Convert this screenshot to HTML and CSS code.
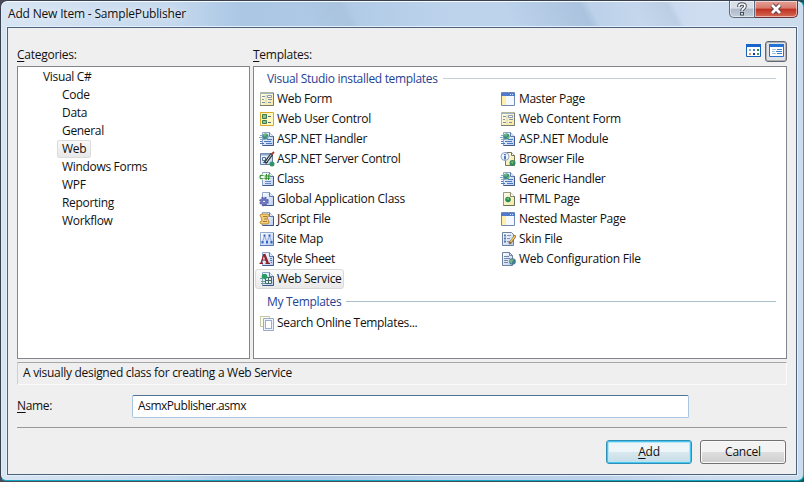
FILE: index.html
```html
<!DOCTYPE html>
<html lang="en">
<head>
<meta charset="utf-8">
<title>Add New Item - SamplePublisher</title>
<link rel="stylesheet" href="styles.css">
</head>
<body>
<svg class="defs" width="0" height="0" aria-hidden="true">
  <defs>
    <linearGradient id="paper" x1="0" y1="0" x2="1" y2="1"><stop offset="0" stop-color="#fff"/><stop offset="1" stop-color="#b9cdf0"/></linearGradient>
    <linearGradient id="cream" x1="0" y1="0" x2="1" y2="1"><stop offset="0" stop-color="#fffef0"/><stop offset="1" stop-color="#f6e79a"/></linearGradient>
    <symbol id="page" viewBox="0 0 16 16">
      <path d="M3.5 1.5h7l4 4v9h-11z" fill="url(#paper)" stroke="#8ea4c8"/>
      <path d="M14.500 5v9.500h-11" fill="none" stroke="#41598a"/>
      <path d="M10.500 1.500v4h4" fill="#dce8fa" stroke="#5f7bab"/>
    </symbol>
    <symbol id="form" viewBox="0 0 16 16">
      <path d="M1.500 1.500h13v13h-13z" fill="url(#cream)" stroke="#b3b698"/>
      <path d="M14.500 2v12.500H1" fill="none" stroke="#777d70"/>
      <path d="M2 2.500h12" stroke="#9eb3cf"/>
      <path d="M3 5.500h3M3 8.500h2M3 11.500h3M9 8.500h4M9 11.500h3" stroke="#7d90b0"/>
      <path d="M8.500 4.500h4v2h-4z" fill="#fff" stroke="#8d9bb2"/>
      <path d="M7 4v9" stroke="#d0d2bb"/>
    </symbol>
    <symbol id="control" viewBox="0 0 16 16">
      <path d="M1.500 1.500h13v13h-13z" fill="#fff8bb" stroke="#d7a927"/>
      <path d="M3.500 3.500h4v4h-4zM3.500 9.500h4v3h-4z" fill="#8fc387" stroke="#3f7850"/>
      <path d="M9 5.500h3M9 11.500h3" stroke="#55657b"/>
    </symbol>
    <symbol id="handler" viewBox="0 0 16 16">
      <use href="#page"/>
      <path d="M8 8.500h5M5 10.500h7M7 12.500h6M1 10.500h2M1 12.500h4" stroke="#4b7abd"/>
      <circle cx="6.500" cy="5.500" r="3" fill="#3d8b88"/>
      <path d="M4 4q2-3 4-1L6 6zM7 7l2-2v3" fill="#6dbb70"/>
      <path d="M1 4.500h2M0 6.500h4M1 8.500h5" stroke="#7fa6cb"/>
    </symbol>
    <symbol id="server" viewBox="0 0 16 16">
      <path d="M1.500 2.500h12v11h-12z" fill="url(#paper)" stroke="#657b9f"/>
      <path d="M2 3.500h11" stroke="#8da6d2" stroke-width="2"/>
      <path d="M3.500 6.500h3v3h-3zM4 11.500h5" fill="none" stroke="#59719d"/>
      <path d="M6 12l7-9" stroke="#263644" stroke-width="3"/>
      <path d="M7 11l5-7" stroke="#dbdfd1"/>
      <path d="M12 4l3-3" stroke="#a54339" stroke-width="2"/>
      <circle cx="13" cy="13" r="2.500" fill="#2c956a"/>
    </symbol>
    <symbol id="class" viewBox="0 0 16 16">
      <use href="#page"/>
      <path d="M6 10.500h6M6 12.500h6" stroke="#688ac0"/>
      <path d="M0 3h11v6H0z" fill="#f3fff0"/>
      <path d="M4.500 4.500q-3.500-1-3.500 1.500t3.500 1.500M7.500 3L7 9M10 3L9.500 9M5.500 5h6M5.200 7.300h6" fill="none" stroke="#2c8a2a" stroke-width="1.100"/>
    </symbol>
    <symbol id="global" viewBox="0 0 16 16">
      <use href="#page"/>
      <circle cx="5" cy="10.500" r="3.800" fill="#777fc5" stroke="#5a63b0" stroke-width="2" stroke-dasharray="1.800 1.200"/>
      <circle cx="5" cy="10.500" r="1.500" fill="#dfe2fa" stroke="#555ca5"/>
    </symbol>
    <symbol id="script" viewBox="0 0 16 16">
      <use href="#page"/>
      <path d="M2 3h7q2 1 0 3H8l2 5q0 2-2 2H2q-2-2 0-3h1L2 6Q0 4 2 3z" fill="#f3cf78" stroke="#bd8a3c"/>
      <path d="M4 5.500h4M5 8h3M4 10.500h4" stroke="#a97a35"/>
    </symbol>
    <symbol id="sitemap" viewBox="0 0 16 16">
      <path d="M1.500 1.500h13v13h-13z" fill="url(#paper)" stroke="#91a9d1"/>
      <path d="M14.500 2v12.500H1" fill="none" stroke="#5576b5"/>
      <path d="M5.500 5l-2 6M5.500 5l2.500 6M10.500 5L8 11M10.500 5l2 6" stroke="#8aa4dc"/>
      <path d="M4.500 3.500h2v2h-2zM9.500 3.500h2v2h-2zM2.500 10h2v2.500h-2zM7 10h2v2.500H7zM11.500 10h2v2.500h-2z" fill="#315fc2"/>
    </symbol>
    <symbol id="style" viewBox="0 0 16 16">
      <use href="#page"/>
      <path d="M11 7.500h2M11 9.500h2M12 11.500h1" stroke="#5878a9"/>
      <path d="M2 12L5 3M3 9h5M.5 12.300h3.500M6.500 12.300h4.500" fill="none" stroke="#8f2026" stroke-width="1.200"/>
      <path d="M5.200 3l3.500 9" stroke="#8f2026" stroke-width="2.300"/>
    </symbol>
    <symbol id="service" viewBox="0 0 16 16">
      <use href="#page"/>
      <path d="M6.500 6.500h6v6h-6zM9.500 6v7M6 9.500h7" fill="#e0f0ed" stroke="#47696a"/>
      <circle cx="5.500" cy="5.500" r="2.800" fill="#299b65"/>
      <path d="M1 7.500h4M2 10.500h4M2 12.500h4" stroke="#66a49a"/>
    </symbol>
    <symbol id="search" viewBox="0 0 16 16">
      <path d="M1.500 1.500h9v10h-9z" fill="#fffde7" stroke="#c4c6a9"/>
      <path d="M4.500 3.500h10v12h-10z" fill="#eaf2ff" stroke="#9baac5"/>
      <path d="M6.500 5.500h6v8h-6z" fill="#fff" stroke="#3d639e" stroke-dasharray="1 1"/>
    </symbol>
    <symbol id="master" viewBox="0 0 16 16">
      <path d="M1.500 1.500h13v13h-13z" fill="#f5f8fd" stroke="#6f88b6"/>
      <path d="M1 2h14v3H1z" fill="#4f7acb"/>
      <path d="M2 5h4v9H2z" fill="#fff0a7"/>
      <path d="M10 3.500h1M12 3.500h1" stroke="#dce8ff"/>
    </symbol>
    <symbol id="browser" viewBox="0 0 16 16">
      <path d="M5.500 1.500h6l3 3v10h-9z" fill="url(#cream)" stroke="#77745c"/>
      <path d="M11.500 1.500v3h3" fill="#fff" stroke="#77745c"/>
      <circle cx="5" cy="5.500" r="4" fill="#eef5ff" stroke="#8da4c7"/>
      <path d="M5 3v1.200M5 5v3.500" stroke="#244b9c" stroke-width="1.500"/>
      <circle cx="12.500" cy="12" r="3" fill="#328864"/>
      <path d="M10.500 11l3-1-1 3" fill="#8ac366"/>
    </symbol>
    <symbol id="html" viewBox="0 0 16 16">
      <path d="M3.500 1.500h7l4 4v9h-11z" fill="url(#cream)" stroke="#989a86"/>
      <path d="M14.500 5v9.500h-11" fill="none" stroke="#65725f"/>
      <path d="M10.500 1.500v4h4" fill="#fff" stroke="#8a876f"/>
      <circle cx="8" cy="8.500" r="2.800" fill="#2b885d"/><path d="M6 8l3-2v3" fill="#78bc67"/>
    </symbol>
    <symbol id="skin" viewBox="0 0 16 16">
      <path d="M2.500 1.500h9l2 2v11h-11z" fill="url(#paper)" stroke="#6c80a2"/>
      <path d="M4 4.500h2M4 7.500h2M4 10.500h2" stroke="#5a79b2" stroke-width="2"/>
      <path d="M7 4.500h4M7 7.500h3M7 10.500h3" stroke="#8296b2"/>
      <path d="M9 12.500l1.500-1 5-7" fill="none" stroke="#846a34" stroke-width="2.600"/><path d="M10.500 11l4.500-6" stroke="#efc75b" stroke-width="1.400"/>
    </symbol>
    <symbol id="config" viewBox="0 0 16 16">
      <path d="M2.500 1.500h7l3 3v10h-10z" fill="url(#paper)" stroke="#6f819e"/>
      <path d="M9.500 1.500v3h3M4 5.500h5M4 7.500h6M4 9.500h4M4 11.500h4" fill="none" stroke="#7188ab"/>
      <circle cx="12.500" cy="10.500" r="3.300" fill="#447f91"/><path d="M10 9l4-1-2 3v2l-2-2z" fill="#77b978"/>
    </symbol>
  </defs>
</svg>
<main class="window">
  <header class="titlebar">
    <h1 class="title">Add New Item - SamplePublisher</h1>
    <div class="caption">
      <button class="help" aria-label="Help"><svg width="12" height="14" viewBox="0 0 12 14"><path d="M3 5V4q0-2 3-2t3 2q0 1.500-1.500 2.500Q6 7.500 6 9" fill="none" stroke="#474b58" stroke-width="3.600"/><path d="M4 10h4v3.500H4z" fill="#474b58"/><path d="M3 4.700V4q0-2 3-2t3 2q0 1.500-1.500 2.500Q6 7.500 6 8.700M6 11v1.500" fill="none" stroke="#fff" stroke-width="1.700"/></svg></button>
      <button class="close" aria-label="Close"><svg width="14" height="12" viewBox="0 0 14 12"><path d="M3 2l8 8M11 2l-8 8" stroke="#624048" stroke-width="4.600"/><path d="M3 2l8 8M11 2l-8 8" stroke="#fff" stroke-width="2.700"/></svg></button>
    </div>
  </header>
  <section class="client">
    <div class="labels">
      <span class="cat-label"><u>C</u>ategories:</span>
      <span class="tpl-label"><u>T</u>emplates:</span>
      <div class="views">
        <button class="view" aria-label="Large icons"><svg width="15" height="14" viewBox="0 0 15 14"><path d="M.5.5h14v12H.5z" fill="#fff" stroke="#1760ba"/><path d="M0 1.500h15" stroke="#1764cb" stroke-width="3"/><path d="M3 5h2v2H3z" fill="#87a8cd"/><path d="M7 5h2v2H7z" fill="#4d83c5"/><path d="M11 5h2v2h-2z" fill="#36834c"/><path d="M3 9h2v2H3z" fill="#df9272"/><path d="M7 9h2v2H7z" fill="#202b91"/><path d="M11 9h2v2h-2z" fill="#4b9a55"/></svg></button>
        <button class="view pressed" aria-label="Small icons"><svg width="15" height="14" viewBox="0 0 15 14"><path d="M.5.500h14v12H.5z" fill="#fff" stroke="#2872cb"/><path d="M0 1.500h15" stroke="#2472d4" stroke-width="3"/><path d="M3 5.500h4M3 7.500h3M3 9.500h4" stroke="#a3bddb"/><path d="M8 5.500h5M7 7.500h6M8 9.500h5" stroke="#397cd0"/></svg></button>
      </div>
    </div>
    <div class="lists">
      <ul class="categories">
        <li class="root">Visual C#</li>
        <li>Code</li><li>Data</li><li>General</li>
        <li><span class="picked">Web</span></li>
        <li>Windows Forms</li><li>WPF</li><li>Reporting</li><li>Workflow</li>
      </ul>
      <div class="templates">
        <h2 class="group"><span>Visual Studio installed templates</span></h2>
        <div class="columns">
          <ul>
            <li><svg><use href="#form"/></svg><span>Web Form</span></li>
            <li><svg><use href="#control"/></svg><span>Web User Control</span></li>
            <li><svg><use href="#handler"/></svg><span>ASP.NET Handler</span></li>
            <li><svg><use href="#server"/></svg><span>ASP.NET Server Control</span></li>
            <li><svg><use href="#class"/></svg><span>Class</span></li>
            <li><svg><use href="#global"/></svg><span class="roomy">Global Application Class</span></li>
            <li><svg><use href="#script"/></svg><span>JScript File</span></li>
            <li><svg><use href="#sitemap"/></svg><span>Site Map</span></li>
            <li><svg><use href="#style"/></svg><span>Style Sheet</span></li>
            <li class="chosen"><svg><use href="#service"/></svg><span>Web Service</span></li>
          </ul>
          <ul class="second">
            <li><svg><use href="#master"/></svg><span>Master Page</span></li>
            <li><svg><use href="#form"/></svg><span class="roomy">Web Content Form</span></li>
            <li><svg><use href="#handler"/></svg><span class="roomy">ASP.NET Module</span></li>
            <li><svg><use href="#browser"/></svg><span>Browser File</span></li>
            <li><svg><use href="#handler"/></svg><span>Generic Handler</span></li>
            <li><svg><use href="#html"/></svg><span class="roomy">HTML Page</span></li>
            <li><svg><use href="#master"/></svg><span>Nested Master Page</span></li>
            <li><svg><use href="#skin"/></svg><span class="roomy">Skin File</span></li>
            <li><svg><use href="#config"/></svg><span class="roomy">Web Configuration File</span></li>
          </ul>
        </div>
        <h2 class="group mine"><span>My Templates</span></h2>
        <ul class="online"><li><svg><use href="#search"/></svg><span>Search Online Templates...</span></li></ul>
      </div>
    </div>
    <p class="description">A visually designed class for creating a Web Service</p>
    <div class="name-row">
      <label for="name"><u>N</u>ame:</label>
      <input id="name" type="text" value="AsmxPublisher.asmx">
    </div>
    <div class="actions">
      <button class="btn primary"><u>A</u>dd</button>
      <button class="btn">Cancel</button>
    </div>
  </section>
</main>
</body>
</html>
```
FILE: styles.css
```css
* { box-sizing: border-box; margin: 0; padding: 0; }
body {
  width: 804px; height: 482px; overflow: hidden;
  background: linear-gradient(90deg, #4b4a57 0 50%, #0d5961 100%);
  font: 12px/18px "Open Sans", "Noto Sans", sans-serif;
  letter-spacing: -0.32px;
  color: #111;
}
.defs { display: block; }
ul { list-style: none; }
button, input { font: inherit; letter-spacing: inherit; color: inherit; }
u { text-decoration: underline; text-underline-offset: 2px; text-decoration-thickness: 1px; }
.window {
  width: 804px; height: 481px; padding: 0 6px 6px;
  border: 1px solid #39404f; border-right-color: #1bb6c4; border-bottom-color: #13a9c2;
  border-radius: 7px 7px 6px 6px;
  background:
    linear-gradient(62deg, transparent 0 40%, #9fb6cf50 56%, transparent 60%) 220px 0 / 220px 27px no-repeat,
    linear-gradient(62deg, transparent 0 30%, #92afcf70 62%, transparent 66%) 440px 0 / 230px 27px no-repeat,
    linear-gradient(62deg, transparent 0 30%, #a9bfd770 60%, transparent 66%) 610px 0 / 100px 27px no-repeat,
    linear-gradient(90deg, #d8e5f3 0, #c5d9ee 170px, #aac7e4 240px, #aec9e5 330px, #bdd3ec 450px, #bdd2ea 600px, #cfddf0 700px, #cbdced 100%);
  box-shadow: inset 0 1px #f4faff, inset 1px 0 #dceafa;
}
.titlebar { display: flex; justify-content: space-between; height: 26px; }
.title { padding: 4px 0 0 1px; font-size: 12px; font-weight: 400; line-height: 18px; letter-spacing: -0.18px; text-shadow: 0 0 6px #fff; }
.caption { display: flex; width: 69px; height: 17px; margin-right: -1px; }
.caption button { display: flex; align-items: center; justify-content: center; border: 1px solid #5e6878; border-top: 0; box-shadow: inset 0 0 0 1px #ffffff80; }
.caption .help { width: 26px; border-radius: 0 0 0 5px; background: linear-gradient(#d8dfe8 0 45%, #adb9c9 50%, #c4cfdc); }
.caption .close { width: 43px; border-left: 0; border-color: #6b3038; border-radius: 0 0 5px 0; background: linear-gradient(#e4a198 0, #d9796d 45%, #bd2f20 50%, #d66b55); }
.client {
  height: 448px; padding: 13px 9px 0; border: 1px solid #4e627c;
  background: #efefef; box-shadow: 0 0 0 1px #e4f0fb;
}
.labels { display: flex; height: 25px; }
.labels span { padding-top: 5px; letter-spacing: -0.26px; }
.cat-label { width: 236px; }
.views { display: flex; gap: 4px; margin-left: auto; }
.view { display: flex; justify-content: center; width: 15px; height: 21px; padding-top: 3px; background: none; border: 0; }
.view.pressed { width: 22px; padding-top: 2px; border: 1px solid #62676e; border-radius: 3px; background: #e1e3e6; box-shadow: inset 0 0 0 1px #aeb3b9; }
.lists { display: flex; gap: 3px; height: 293px; width: 770px; }
.categories { width: 233px; padding: 1px 0 0 44px; background: #fff; border: 1px solid #82858a; }
.categories .root { margin-left: -19px; }
.picked { display: inline-block; height: 18px; margin-left: -5px; padding: 0 4px; border: 1px solid #dcdcdc; border-radius: 2px; line-height: 16px; background: linear-gradient(#f8f8f8, #e8e8e8); vertical-align: top; }
.templates { flex: 1; padding: 2px 10px 0 3px; background: #fff; border: 1px solid #82858a; }
.group { display: flex; align-items: center; gap: 5px; height: 19px; padding-left: 10px; font-size: 12px; font-weight: 400; color: #263f94; }
.group::after { content: ""; flex: 1; height: 1px; background: #c5cfd6; }
.columns { display: grid; grid-template-columns: 241px 1fr; padding-top: 1px; }
.templates li { display: flex; align-items: center; gap: 2px; width: max-content; height: 20px; padding: 0 1px 0 2px; line-height: 18px; }
.templates .second li { gap: 3px; }
.templates li svg { width: 16px; height: 16px; }
.templates .chosen { padding: 0 1px 0 3px; margin-left: -2px; border: 1px solid #dadada; border-radius: 3px; background: linear-gradient(#fafafa, #e9e9e9); }
.roomy { letter-spacing: -0.23px; }
.mine { height: 25px; }
.mine::after { background: #a9c0c8; }
.online { margin-top: -1px; }
.description { height: 23px; margin-top: 3px; padding: 0 5px; line-height: 20px; border: 1px solid #fbfbfb; border-top-color: #a7a7a7; border-left-color: #d0d0d0; letter-spacing: -0.29px; }
.name-row { display: flex; align-items: center; height: 43px; border-bottom: 1px solid #999; }
.name-row label { width: 115px; }
.name-row input { width: 557px; height: 23px; padding: 0 5px 2px; background: #fff; border: 1px solid #a9c7e2; border-top-color: #4d7399; border-radius: 2px; outline: 0; letter-spacing: -0.46px; }
.actions { display: flex; justify-content: flex-end; gap: 8px; padding: 12px 1px 0 0; letter-spacing: -0.2px; }
.btn { width: 86px; height: 24px; border: 1px solid #717171; border-radius: 3px; background: linear-gradient(#f3f3f3 0 48%, #dedede 52%, #cecece); box-shadow: inset 0 0 0 1px #fafafa; }
.btn.primary { border-color: #2f8fb5; background: linear-gradient(#edf5f8 0 48%, #d9e8ef 52%, #c4dce6); box-shadow: inset 0 0 0 1px #45c6f2, inset 0 0 0 2px #b6e5f4; }
```
